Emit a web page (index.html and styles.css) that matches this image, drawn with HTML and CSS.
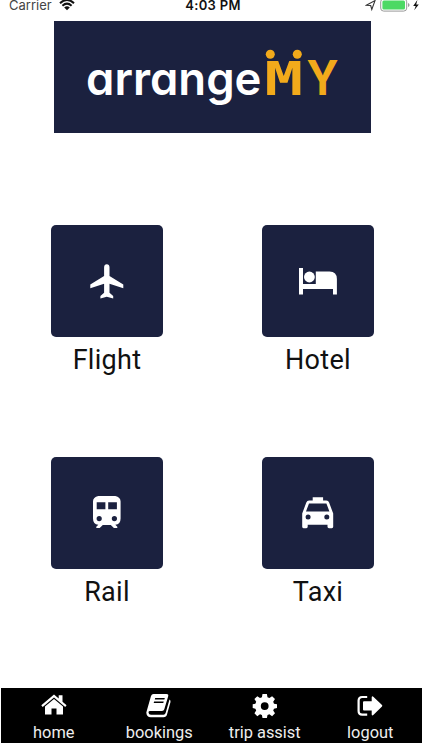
FILE: index.html
```
<!DOCTYPE html>
<html lang="en">
<head>
    <meta charset="UTF-8">
    <meta name="viewport" content="width=device-width, initial-scale=1.0">
    <title>arrangeMY</title>
    <link rel="stylesheet" href="styles.css">
</head>
<body>

<div class="status">
    <div class="carrier">
        <span>Carrier</span>
        <svg width="16" height="11" viewBox="0 1 16 11">
            <path d="M1 4.2Q8-2.2 15 4.2M3.4 6.7Q8 2.6 12.6 6.7" fill="none" stroke="#111" stroke-width="2"/>
            <path d="M5.2 8.4Q8 6.1 10.8 8.4L8 11.3z" fill="#111"/>
        </svg>
    </div>
    <div class="time">4:03 PM</div>
    <div class="power">
        <svg width="56" height="12" viewBox="0 2 56 12">
            <path d="M1.3 7.3L10 2.6L6.8 11.5L5.7 7.5z" fill="none" stroke="#333" stroke-width="1.1"/>
            <rect x="15.7" y="0.8" width="26" height="12.3" rx="3" fill="#fff" stroke="#999" stroke-width="1"/>
            <rect x="17.4" y="2.5" width="22.6" height="8.9" rx="1.5" fill="#4cd964"/>
            <path d="M43 5v4q1.6-.6 1.6-2T43 5" fill="#999"/>
            <path d="M52.4 1.9L48.2 8h2.5L49.2 12.2L53.8 6.6H51.2z" fill="#111"/>
        </svg>
    </div>
</div>

<header class="logo">
    <svg width="317" height="112" viewBox="0 0 317 112">
        <text class="logo-name" x="32" y="74" textLength="175.5" lengthAdjust="spacingAndGlyphs">arrange</text>
        <g class="logo-my">
            <circle cx="216.3" cy="33.2" r="4.5"/>
            <circle cx="243.3" cy="33.2" r="4.5"/>
            <text class="logo-m" x="210.5" y="74" textLength="38.5" lengthAdjust="spacingAndGlyphs">M</text>
            <text class="logo-y" x="252.5" y="74" textLength="32" lengthAdjust="spacingAndGlyphs">Y</text>
        </g>
    </svg>
</header>

<main class="menu">
    <div class="item">
        <div class="tile">
            <svg width="34" height="35" viewBox="0 0 34 35">
                <path d="M14.1 12V3.2Q14.2 .3 16.8 .3T19.5 3.2V12L33.3 20.4V24.2L19.5 19.8V28.8L23.2 31.9V34.6L16.8 32.8L10.4 34.6V31.9L14.1 28.8V19.8L.3 24.2V20.4z"/>
            </svg>
        </div>
        <span class="name">Flight</span>
    </div>
    <div class="item">
        <div class="tile">
            <svg width="38" height="27" viewBox="0 0 38 27">
                <path d="M0 0H4V16H16.8V3.4H30.5Q37.9 3.4 37.9 11V26.5H34V21H4V26.5H0z"/>
                <circle cx="10.4" cy="9" r="5.4"/>
            </svg>
        </div>
        <span class="name">Hotel</span>
    </div>
    <div class="item">
        <div class="tile">
            <svg width="28" height="34" viewBox="0 1 28 34">
                <path fill-rule="evenodd" d="M0 6.5C0 1.5 5 .3 13.8 .3S27.6 1.5 27.6 6.5V23.5Q27.6 29.3 22.3 29.7L24.3 31.8V33H20.9L17.8 30H9.8L6.7 33H3.3V31.8L5.3 29.7Q0 29.3 0 23.5zM3.7 7.2V14.2H12.4V7.2zM15.2 7.2V14.2H23.9V7.2zM6.2 21A2.6 2.6 0 1 0 6.2 26.2A2.6 2.6 0 1 0 6.2 21zM21.4 21A2.6 2.6 0 1 0 21.4 26.2A2.6 2.6 0 1 0 21.4 21z"/>
            </svg>
        </div>
        <span class="name">Rail</span>
    </div>
    <div class="item">
        <div class="tile">
            <svg width="32" height="32" viewBox="0 0 32 32">
                <path fill-rule="evenodd" d="M10.7 .3H21.1V3.6H24.3Q26.4 3.6 27.1 5.6L31.2 16.5V29.8Q31.2 31.2 29.8 31.2H27Q25.5 31.2 25.5 29.8V27.8H5.7V29.8Q5.7 31.2 4.3 31.2H1.5Q.2 31.2 .2 29.8V16.5L4.3 5.6Q5 3.6 7.1 3.6H10.7zM7 6.4L4 14.4H27.4L24.4 6.4zM6.1 17.6A2.5 2.5 0 1 0 6.1 22.6A2.5 2.5 0 1 0 6.1 17.6zM24.8 17.6A2.5 2.5 0 1 0 24.8 22.6A2.5 2.5 0 1 0 24.8 17.6z"/>
            </svg>
        </div>
        <span class="name">Taxi</span>
    </div>
</main>

<nav class="tabs">
    <div class="tab">
        <svg width="26" height="26" viewBox="0 0 26 26">
            <path d="M.3 12.2L13 1.5L17.7 5.5V2.2H21.5V8.7L25.6 12.2L24.2 13.9L13 4.5L1.7 13.9z"/>
            <path d="M4 13.6L13 6.1L22 13.6V21.5H15.5V15.5H10.5V21.5H4z"/>
        </svg>
        <span>home</span>
    </div>
    <div class="tab">
        <svg width="26" height="26" viewBox="0 0 26 26">
            <path fill-rule="evenodd" d="M7.5 1H20.5Q22.8 1 22.2 3.3L18.3 16.2Q17.8 18 16 18H4Q2.5 18 2.5 19.4Q2.7 21.7 5 21.7H17.5Q19 21.7 19.6 20L23.5 6.5Q24.8 7.2 24.5 9L21 21.5Q20.3 24.3 17.5 24.3H4.8Q.5 24 .3 19.5L5 3Q5.7 1 7.5 1zM9.2 5L8.8 6.4H18.4L18.8 5zM8.1 8.5L7.7 9.9H17.3L17.7 8.5z"/>
        </svg>
        <span>bookings</span>
    </div>
    <div class="tab">
        <svg width="26" height="26" viewBox="0 0 26 26">
            <path fill-rule="evenodd" d="M10.5 1H14.9L15.5 4.2L17.4 5L20.1 3.2L23 6.1L21.2 8.8L22 10.7L25 11.3V15.1L22 15.7L21.2 17.6L23 20.2L20.1 23.2L17.4 21.3L15.5 22.1L14.9 25H10.5L9.9 22.1L8 21.3L5.3 23.2L2.4 20.2L4.2 17.6L3.4 15.7L.7 15.1V11.3L3.4 10.7L4.2 8.8L2.4 6.1L5.3 3.2L8 5L9.9 4.2zM12.7 9.2A3.9 3.9 0 1 0 12.7 17A3.9 3.9 0 1 0 12.7 9.2z"/>
        </svg>
        <span>trip assist</span>
    </div>
    <div class="tab">
        <svg width="26" height="26" viewBox="0 0 26 26">
            <path d="M10.2 4H5.2Q1.6 4 1.6 7.6V18Q1.6 21.6 5.2 21.6H10.2" fill="none" stroke="#fff" stroke-width="2.2"/>
            <path d="M7 8.3H14.7V4.2Q15 2.7 16.3 3.7L25 12Q25.6 12.8 25 13.6L16.3 22Q15 23 14.7 21.5V17.5H7Q6 17.5 6 16.5V9.3Q6 8.3 7 8.3z"/>
        </svg>
        <span>logout</span>
    </div>
</nav>

</body>
</html>
```
FILE: styles.css
```
body {
    margin: 0;
    height: 750px;
    background-color: #FFFFFF;
    font-family: Roboto, "Liberation Sans", sans-serif;
    overflow: hidden;
    display: flex;
    flex-direction: column;
}
.status {
    height: 21px;
    display: grid;
    grid-template-columns: 1fr auto 1fr;
    font-family: Inter, sans-serif;
    font-size: 13px;
    line-height: 10px;
    color: #444444;
    padding: 0 1px 0 9px;
    box-sizing: border-box;
}
.carrier {
    display: flex;
    gap: 7px;
}
.time {
    margin-left: -4px;
    font-weight: 600;
    letter-spacing: 0.3px;
    color: #111111;
}
.power {
    display: flex;
    justify-content: flex-end;
}
.logo {
    width: 317px;
    height: 112px;
    margin: 0 0 92px 54px;
    background-color: #1B213F;
}
.logo svg {
    display: block;
}
.logo-name {
    font-family: Inter, sans-serif;
    font-size: 46px;
    font-weight: 600;
    font-feature-settings: "cv11";
    fill: #FFFFFF;
}
.logo-my {
    fill: #F2AA1B;
}
.logo-m {
    font-family: "DejaVu Sans Mono", monospace;
    font-size: 47px;
    font-weight: bold;
}
.logo-y {
    font-family: Inter, sans-serif;
    font-size: 48px;
    font-weight: 700;
}
.menu {
    display: grid;
    grid-template-columns: 211px 211px;
    grid-auto-rows: 231.5px;
    padding-left: 1.5px;
}
.item {
    display: flex;
    flex-direction: column;
    align-items: center;
}
.tile {
    width: 112px;
    height: 112px;
    display: flex;
    align-items: center;
    justify-content: center;
    background-color: #1B213F;
    border-radius: 5px;
}
.tile svg {
    fill: #FFFFFF;
}
.name {
    margin-top: 7px;
    font-size: 27px;
    line-height: 32px;
    letter-spacing: 0.3px;
    color: #111111;
}
.tabs {
    display: grid;
    grid-template-columns: repeat(4, 105.5px);
    height: 55px;
    margin: auto 0 7px 1px;
    background-color: #000000;
}
.tab {
    display: flex;
    flex-direction: column;
    align-items: center;
    padding-top: 5px;
    color: #EEEEEE;
    font-size: 16.4px;
    line-height: 20px;
}
.tab svg {
    fill: #FFFFFF;
    margin-bottom: 4px;
}
```
